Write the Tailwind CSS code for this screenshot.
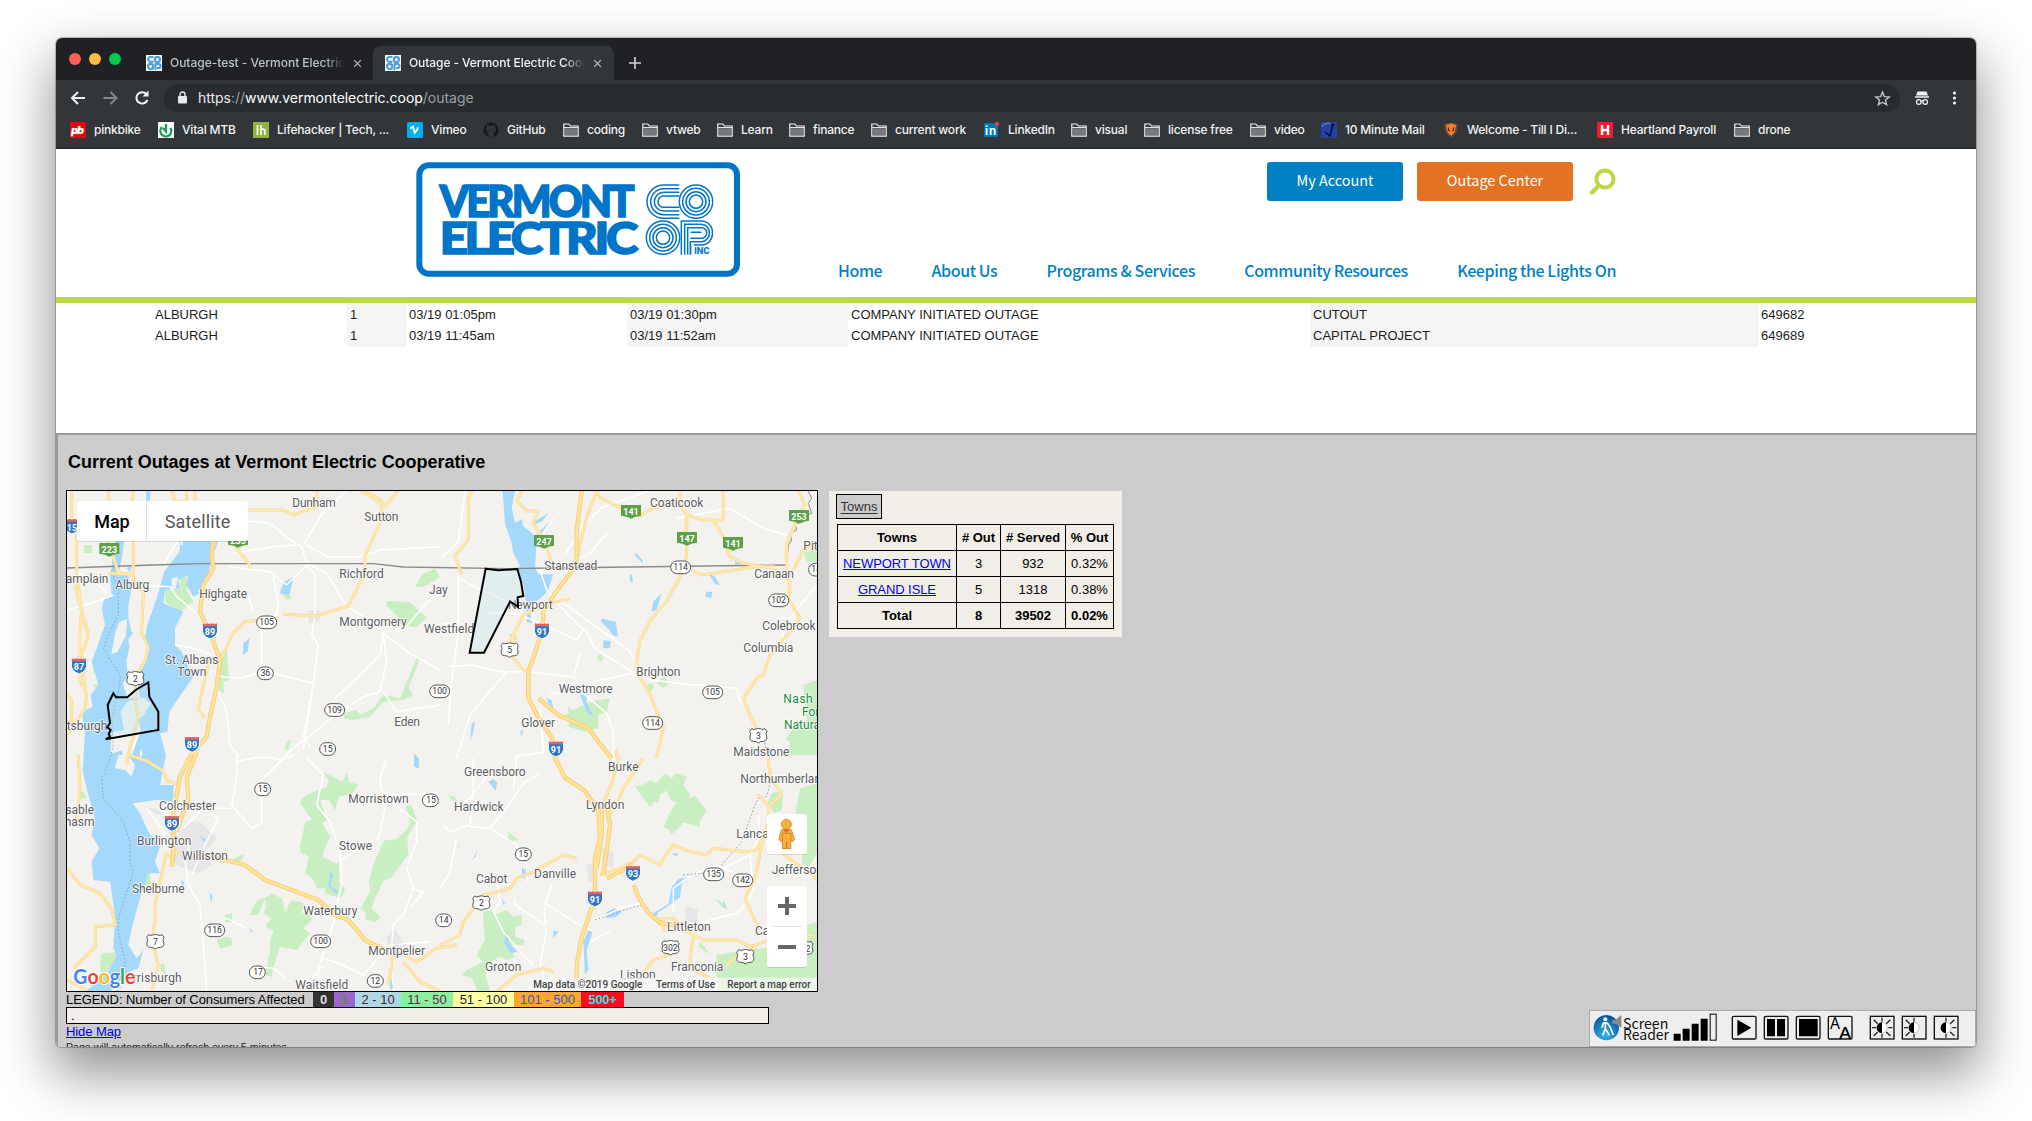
<!DOCTYPE html>
<html lang="en">
<head>
<meta charset="utf-8">
<title>Outage - Vermont Electric Coop</title>
<script src="https://cdn.jsdelivr.net/npm/@tailwindcss/browser@4"></script>
</head>
<body class="bg-white w-[2032px] h-[1121px] overflow-hidden pt-[38px] pl-[56px]">
<svg width="0" height="0" class="absolute">
  <defs>
    <symbol id="folder" viewBox="0 0 16 16"><path d="M.8 14.2V2h5l1.6 2h7.8v10.200z" fill="#35383b" stroke="#f1f3f4" stroke-width="1.2"/><path d="M2 6.500h12v6.500H2z" fill="#76797c"/><path d="M1 5.600h14" stroke="#f1f3f4" stroke-width="1"/></symbol>
    <symbol id="coop" viewBox="0 0 16 16"><rect width="16" height="16" fill="#fff"/><g fill="none" stroke="#4f9ed6" stroke-width="2.200"><path d="M7.500 2H4.500a2.300 2.300 0 0 0 0 4.800h3"/><circle cx="11.400" cy="4.400" r="2.600"/><circle cx="4.600" cy="11.500" r="2.600"/><path d="M9.500 15V9h3a2 2 0 0 1 0 4H11"/></g></symbol>
    <symbol id="close" viewBox="0 0 10 10"><path d="M1.300 1.300l7.400 7.400M8.700 1.300L1.300 8.700" stroke="#bdc1c6" stroke-width="1.300"/></symbol>
    <symbol id="interstate" viewBox="0 0 48 50" overflow="visible"><path d="M3 2q8 3 14 0q7 3 14 0q7 3 14 0l2 14q3 24-23 33Q-2 40 1 16z" fill="#3078c6" stroke="#fff" stroke-width="3"/><path d="M3 2q8 3 14 0q7 3 14 0q7 3 14 0v9H2z" fill="#e0645f"/></symbol>
    <symbol id="usroute" viewBox="0 0 56 48" overflow="visible"><path d="M8 3q7 4 12 1q8-3 16 0q6 3 12-1l6 8q-6 8-1 15q3 14-10 15q-10 0-15 5q-5-5-15-5Q0 40 3 26q5-8-1-15z" fill="#fff" stroke="#555" stroke-width="3"/></symbol>
    <symbol id="quebec" viewBox="0 0 60 44" overflow="visible"><path d="M0 2h60v32q-18 1-30 9Q18 35 0 34z" fill="#5da048"/></symbol>
    <symbol id="r3" viewBox="0 0 62 38" overflow="visible"><rect x="1" y="1" width="60" height="38" rx="19" fill="#fff" stroke="#555" stroke-width="3"/></symbol>
    <symbol id="r2" viewBox="0 0 50 38" overflow="visible"><rect x="1" y="1" width="48" height="38" rx="19" fill="#fff" stroke="#555" stroke-width="3"/></symbol>
  </defs>
</svg>

<div class="w-[1920px] h-[1009px] rounded-t-[6px] rounded-b-[5px] overflow-hidden bg-white flex flex-col shadow-[0_0_1px_1px_rgba(0,0,0,0.25),0_24px_52px_4px_rgba(0,0,0,0.42)]">

  <!-- tab strip -->
  <div class="h-[42px] bg-[#202124] flex items-end shrink-0 font-['Inter',sans-serif] text-[12px] font-medium">
    <div class="flex gap-2 pl-[13px] pb-[15px] w-[90px]">
      <div class="size-3 rounded-full bg-[#ff5f57]"></div><div class="size-3 rounded-full bg-[#febc40]"></div><div class="size-3 rounded-full bg-[#00ca4e]"></div>
    </div>
    <div class="h-[34px] w-[227px] flex items-center text-[#bdc1c6]">
      <svg width="16" height="16" class="shrink-0"><use href="#coop"/></svg>
      <div class="ml-2 w-[174px] overflow-hidden whitespace-nowrap tracking-[-0.03px] [mask-image:linear-gradient(to_right,black_155px,transparent)]">Outage-test - Vermont Electric Coop</div>
      <svg width="9" height="9" class="ml-[9px] shrink-0"><use href="#close"/></svg>
    </div>
    <div class="h-[34px] w-[241px] rounded-t-[8px] bg-[#323639] flex items-center pl-3 text-[#f1f3f4]">
      <svg width="16" height="16" class="shrink-0"><use href="#coop"/></svg>
      <div class="ml-2 w-[176px] overflow-hidden whitespace-nowrap tracking-[-0.08px] [mask-image:linear-gradient(to_right,black_155px,transparent)]">Outage - Vermont Electric Cooperative</div>
      <svg width="9" height="9" class="ml-[8px] shrink-0"><use href="#close"/></svg>
    </div>
    <svg width="12" height="12" viewBox="0 0 12 12" class="ml-[15px] mb-[11px]"><path d="M6 0v12M0 6h12" stroke="#d5d7da" stroke-width="1.600"/></svg>
  </div>

  <!-- address bar -->
  <div class="h-[36px] bg-[#323639] flex items-center shrink-0 font-['Inter',sans-serif] text-[14px]">
    <svg width="108" height="28" viewBox="0 0 108 28" fill="none" stroke-width="2"><path d="M29 14H16.500M22 8l-6 6 6 6" stroke="#f1f3f4"/><path d="M47.500 14H60M54.500 8l6 6-6 6" stroke="#85888b"/><path d="M90.500 10.200A5.700 5.700 0 1 0 91.400 16" stroke="#f1f3f4"/><path d="M92.500 6.500v6h-6z" fill="#f1f3f4"/></svg>
    <div class="h-[28px] w-[1736px] rounded-full bg-[#282c2f] flex items-center pl-[14px] pr-[9px]">
      <svg width="10" height="14" viewBox="0 0 10 14"><rect y="5" width="9" height="7.500" rx="1" fill="#e8eaed"/><path d="M2 6V3.500a2.500 2.500 0 0 1 5 0V6" fill="none" stroke="#e8eaed" stroke-width="1.400"/></svg>
      <div class="ml-[10px] grow text-[#9aa0a6] whitespace-nowrap tracking-[-0.03px] -mt-px"><span class="text-[#e8eaed]">https</span>://<span class="text-white">www.vermontelectric.coop</span>/outage</div>
      <svg width="17" height="17" viewBox="0 0 24 24" fill="none" stroke="#c4c7ca" stroke-width="1.900"><path d="M12 3l2.600 6.300 6.900.5-5.300 4.400 1.700 6.700L12 17.300l-5.900 3.600 1.700-6.700-5.300-4.400 6.900-.5z"/></svg>
    </div>
    <svg width="76" height="28" viewBox="0 0 76 28"><path d="M17.500 7.500h9l1.500 4h-12z" fill="#f1f3f4"/><path d="M15 13h14" stroke="#f1f3f4" stroke-width="1.500"/><g fill="none" stroke="#f1f3f4" stroke-width="1.200"><circle cx="18.800" cy="18" r="2.300"/><circle cx="25.200" cy="18" r="2.300"/><path d="M21 17.500q1-1 2 0"/></g><g fill="#f1f3f4"><circle cx="54.500" cy="9" r="1.600"/><circle cx="54.500" cy="14" r="1.600"/><circle cx="54.500" cy="19" r="1.600"/></g></svg>
  </div>

  <!-- bookmarks -->
  <div class="h-[33px] bg-[#323639] border-b border-[#202124] flex items-start pt-[4px] pl-[14px] shrink-0 font-['Inter',sans-serif] font-medium text-[12px] tracking-[-0.2px] leading-[19px] text-[#f1f3f4] whitespace-nowrap [&_svg]:mt-[2px] [&_svg]:shrink-0">
    <div class="flex gap-2 w-[88px]"><svg width="16" height="16"><rect width="16" height="16" fill="#e30613"/><text x="1" y="12" font-family="Inter" font-weight="900" font-style="italic" font-size="11" fill="#fff" textLength="13">pb</text></svg>pinkbike</div>
    <div class="flex gap-2 w-[95px]"><svg width="16" height="16"><rect width="16" height="16" fill="#fff"/><path d="M4 5a5.500 5.500 0 1 0 8.500 1M8 2v7.500L5 6" fill="none" stroke="#169b52" stroke-width="2.300"/></svg>Vital MTB</div>
    <div class="flex gap-2 w-[154px]"><svg width="16" height="16"><rect width="16" height="16" fill="#8fb33c"/><path d="M4.500 3v10M8 3v10M8 8q3.800-2.200 3.800 1V13" fill="none" stroke="#fff" stroke-width="1.700"/></svg>Lifehacker | Tech, ...</div>
    <div class="flex gap-2 w-[76px]"><svg width="16" height="16"><rect width="16" height="16" rx="1.500" fill="#00adef"/><path d="M3.300 6.500L6 4.700l1.700 6q3.800-3.800 2.800-5.400" fill="none" stroke="#fff" stroke-width="2"/></svg>Vimeo</div>
    <div class="flex gap-2 w-[80px]"><svg width="16" height="16"><path d="M8 .5A7.500 7.500 0 0 0 5.500 15v-2.500q-2 .3-2.700-1.500 2 .9 2.900-.2Q3 10 3 7q0-1.200.9-2.100-.3-1 .1-2 1 0 2.100.8h3.800Q11 3 12 2.900q.4 1 .1 2Q13 5.800 13 7q0 3-2.700 3.800.5.600.5 1.800V15A7.500 7.500 0 0 0 8 .5z" fill="#16181a"/></svg>GitHub</div>
    <div class="flex gap-2 w-[79px]"><svg width="16" height="16"><use href="#folder"/></svg>coding</div>
    <div class="flex gap-2 w-[75px]"><svg width="16" height="16"><use href="#folder"/></svg>vtweb</div>
    <div class="flex gap-2 w-[72px]"><svg width="16" height="16"><use href="#folder"/></svg>Learn</div>
    <div class="flex gap-2 w-[82px]"><svg width="16" height="16"><use href="#folder"/></svg>finance</div>
    <div class="flex gap-2 w-[113px]"><svg width="16" height="16"><use href="#folder"/></svg>current work</div>
    <div class="flex gap-2 w-[87px]"><svg width="16" height="16"><rect y="1" width="14" height="14" fill="#0077b5"/><text x="1" y="12.500" font-family="Inter" font-weight="700" font-size="11.500" fill="#fff" textLength="11">in</text><rect x="11" width="4" height="4" rx="1" fill="#e33e38"/></svg>LinkedIn</div>
    <div class="flex gap-2 w-[73px]"><svg width="16" height="16"><use href="#folder"/></svg>visual</div>
    <div class="flex gap-2 w-[106px]"><svg width="16" height="16"><use href="#folder"/></svg>license free</div>
    <div class="flex gap-2 w-[71px]"><svg width="16" height="16"><use href="#folder"/></svg>video</div>
    <div class="flex gap-2 w-[122px]"><svg width="16" height="16"><rect width="16" height="16" fill="#2442a8"/><path d="M1 4q5-4 9-2" stroke="#8ea3e0" stroke-width="1.500" stroke-dasharray="1 1" fill="none"/><path d="M12 2L9 14 4 10M10 3l2-1 1 2" fill="none" stroke="#0a0d20" stroke-width="1.400"/></svg>10 Minute Mail</div>
    <div class="flex gap-2 w-[154px]"><svg width="16" height="16"><path d="M1 2l7-1.500L15 2l-1 7q-2 4-6 6.500Q4 13 2 9z" fill="#6b4a2f"/><path d="M3 3l5-1.500L13 3l-1 6q-1.500 3-4 4.500Q5.500 12 4 9z" fill="#f47c30"/><path d="M5.500 5.500v2.500l1 1M10.500 5.500v2.500l-1 1" stroke="#3d2516" stroke-width="1.200" fill="none"/></svg>Welcome - Till I Di...</div>
    <div class="flex gap-2 w-[137px]"><svg width="16" height="16"><rect width="16" height="16" fill="#ee1c2e"/><path d="M5 3v10M11 3v10M5 8h6" stroke="#fff" stroke-width="2.400"/></svg>Heartland Payroll</div>
    <div class="flex gap-2"><svg width="16" height="16"><use href="#folder"/></svg>drone</div>
  </div>

  <!-- site header -->
  <header class="h-[154px] bg-white border-b-[6px] border-[#bcd747] shrink-0 flex pl-[360px] font-['Noto_Sans_CJK_SC','Noto_Sans',sans-serif]">
    <svg width="324" height="116" viewBox="49 36 972 348" class="mt-[13px] shrink-0">
      <rect x="59" y="46" width="953" height="325" rx="28" fill="#fff" stroke="#0074c8" stroke-width="18"/>
      <g fill="#0074c8" stroke="#0074c8" stroke-width="5" font-family="Lato" font-weight="900">
        <text y="201" x="120" font-size="133" letter-spacing="-9" textLength="576" lengthAdjust="spacingAndGlyphs">VERMONT</text>
        <text y="312" x="120" font-size="133" letter-spacing="-9" textLength="586" lengthAdjust="spacingAndGlyphs">ELECTRIC</text>
      </g>
      <g fill="none" stroke="#0074c8" stroke-width="4.500">
        <path d="M839 105h-47a50 50 0 0 0 0 100h47M839 116h-47a39 39 0 0 0 0 78h47M839 127h-47a28 28 0 0 0 0 56h47M839 138h-47a17 17 0 0 0 0 34h47"/>
        <circle cx="889" cy="155" r="50" fill="#fff"/><circle cx="889" cy="155" r="40"/><circle cx="889" cy="155" r="30"/><circle cx="889" cy="155" r="20"/>
        <circle cx="790" cy="263" r="50"/><circle cx="790" cy="263" r="40"/><circle cx="790" cy="263" r="30"/><circle cx="790" cy="263" r="20"/>
        <path d="M845 314V213h60a33 33 0 0 1 33 36 33 33 0 0 1-33 36h-23M855 314V223h50a25 25 0 0 1 24 26 25 25 0 0 1-24 26h-33v39M864 314V233h41a15 15 0 0 1 16 16 15 15 0 0 1-16 16h-33M873 247h32M873 285v29"/>
      </g>
      <text x="884" y="312" font-family="Inter" font-weight="800" font-size="26" fill="#0074c8" textLength="46" lengthAdjust="spacingAndGlyphs">INC</text>
    </svg>
    <div class="ml-[98px] w-[778px] flex flex-col">
      <div class="flex justify-end items-start pt-[13px] h-[108px]">
        <div class="w-[136px] h-[39px] rounded-[3px] bg-[#0081c6] text-white text-[14.400px] leading-[36px] text-center">My Account</div>
        <div class="ml-[14px] w-[156px] h-[39px] rounded-[3px] bg-[#e37222] text-white text-[14.400px] leading-[36px] text-center">Outage Center</div>
        <svg width="27" height="27" viewBox="0 0 27 27" class="ml-[16px] mt-[6px]"><circle cx="16" cy="11" r="8.600" fill="none" stroke="#bcd747" stroke-width="4"/><path d="M9.500 18L3 24.500" stroke="#bcd747" stroke-width="4.500" stroke-linecap="round"/></svg>
      </div>
      <nav class="flex justify-between text-[#0081c6] font-medium text-[16px] tracking-[-0.4px] leading-[26px] whitespace-nowrap">
        <a>Home</a><a>About Us</a><a>Programs &amp; Services</a><a>Community Resources</a><a>Keeping the Lights On</a>
      </nav>
    </div>
  </header>

  <!-- outage history -->
  <div class="h-[130px] shrink-0 font-['Liberation_Sans',Arial,sans-serif] text-[13px] text-[#1c1c1c]">
    <div class="grid grid-cols-[195px_59px_221px_221px_462px_448px_1fr] leading-[22px] pl-[96px] [&>div]:pl-[3px] h-[43px]">
      <div><p class="pt-px">ALBURGH</p><p class="-mt-px">ALBURGH</p></div>
      <div class="bg-[#f4f4f4]"><p class="pt-px">1</p><p class="-mt-px">1</p></div>
      <div><p class="pt-px">03/19 01:05pm</p><p class="-mt-px">03/19 11:45am</p></div>
      <div class="bg-[#f4f4f4]"><p class="pt-px">03/19 01:30pm</p><p class="-mt-px">03/19 11:52am</p></div>
      <div><p class="pt-px">COMPANY INITIATED OUTAGE</p><p class="-mt-px">COMPANY INITIATED OUTAGE</p></div>
      <div class="bg-[#f4f4f4]"><p class="pt-px">CUTOUT</p><p class="-mt-px">CAPITAL PROJECT</p></div>
      <div><p class="pt-px">649682</p><p class="-mt-px">649689</p></div>
    </div>
  </div>

  <!-- outage frame -->
  <main class="relative grow min-h-0 bg-[#ccc] border-t-2 border-l-2 border-[#9a9a9a] overflow-hidden font-['Liberation_Sans',Arial,sans-serif] text-[13px] text-black pl-[8px]">
    <h1 class="text-[18px] font-bold leading-[22px] pt-[16px] h-[55px] pl-[2px] tracking-[-0.04px]">Current Outages at Vermont Electric Cooperative</h1>
    <div class="flex items-start gap-[11px]">
      <div class="w-[752px] h-[502px] border border-black shrink-0">
        <svg width="750" height="500" viewBox="21 18 2250 1500">
          <rect x="0" y="0" width="2300" height="1540" fill="#f3f2ef"/>
          <!-- urban areas -->
          <g fill="#e6e6e8"><path d="M740 378l38-2 2 30-32 10zM245 960l50 15 60 80 25-45 40 0 50 50-30 35 15 45-40 25-80-30-10-130z"/><path d="M980 1360l20-30 25 30 30 60-60-5zM1625 1085l38 20-5 45-30-10zM1580 1140l30-10 0 70-25-10zM1875 1265l40 10-5 40-35-10zM1395 320l35-5-5 40-30 5z"/></g>
          <!-- parks -->
          <g fill="#c8eec2">
            <path d="M315 310l60 0 25 40-40 30-45-30zM360 280l20-8 5 40-25-5zM210 450l15-15 15 10-10 40-20-10zM272 390l15-10 0 20-15 3zM72 180h24v24h-24zM95 600l50-10-30 25zM100 550l12 10-14 8zM665 325l20-10 10 25-15 5zM980 347l70 5 50 45-30 30-50-10-5-20-35-35zM1085 270l40-20 15 25-30 20-20 10-25 0zM850 685l40-10 10 15 40-20 30-40 50 10 50-120 10 0-35 90 15 20-30 15-60 5-40 45-50 10-30-5zM475 505l25-10 5 60 5 30-20 5 2 35-15-10zM680 770l15-5-10 30-10 0z"/>
            <path d="M1530 680l60-30 60-10-10 40-25 10 0 40-40 10-50-15 5-25-15-10zM1610 515l12-7 10 12-12 12zM1790 595l20-20 20 18-20 15zM1755 605l20-12 8 12-12 18-15-5zM1345 445l20 5 10 15-20-5zM1525 665l20 20 0 8-22-13z"/>
            <path d="M2230 600l41-15v225h-85l5-40-15-5 30-45 15 15 20-30zM2230 200l41-5v35h-30z"/>
            <path d="M788 860l60 30 12-28 8 28 28 10-20 25-40 10-10 40-20-30-25 0 20 60-15 10 25 40-15 30-10 30 40 20 15-5-5 60 20 25-15 25-45-15 0-15-25 0-10-25-25-20 10-50-25-15 0-20 15-70 20-5-15-20-20-30 5-15 25-15 50-20 5-20z"/>
            <path d="M1035 965l18-8 18 50-30 50 5 50-50 70-25 10-30 60-5 25 25 25-15 15-30-10 0-20-15-10 30-55-5-25 15-55 30-70 40-5 25-25 15-20-5-30zM595 1243l20-3-20 50-25 0 10-25zM615 1240l20-15 30 15 10 40 20-35 35 10-5 30 20-5 10 25-25 25 20 15-40 50-50-10-20 60-5 30-20-5 15-70 0-30 10-35-25-10 20-25-25-15 10-20zM530 1115l25-7-15 22-20-5zM495 1290l20-5 3 25-22 3zM470 1365l25-10 20 5 0 20-33 12zM300 1440l12-5 6 35-15-10zM125 1405l55-5-50 80-10-30zM245 1185l25-30 3 50-20 15zM60 915l12 8 10 15-20 5zM85 820l12 5-2 35-12 0z"/>
            <path d="M1725 905l35-10 10-10 20 10 25-30 20 15 15-15 30 12-10 25 20 25-5 15 20-10 35 45-20 30 0 20-50-15-15 20-20 15-10-15-15-5 20-45 20-30-15-5-15-30-20 10-5 30-10-10-15 20-25-35z" fill-rule="evenodd"/>
            <path d="M1270 1280l25-5 10 15 35-15 20 20 25-5 0 30-20 5 0 30 30 10-5 15-45 0 20 35-20 10-30-10-40 30 5 40 15 50-35 0-15-35-10-20-30-10 15-15 50-25-20-20 25-45-5-60zM1345 1040l30 25-30 5zM1165 930l20 5 10 15-20-5zM1195 1080l8-5-10 15zM1965 1240l25 15 15 20-20-10z"/>
            <path d="M2135 925l35-10-5 60-25 10-8-20-12-5zM2220 910l51-15v210l-25 40-20-10 0-90-20-60zM1970 1410l60-10 110-15 131 20v120h-290l-5-40-10-20zM2240 1320l31-10v110h-31zM1920 1370l30 35-15-5-20-15z"/>
          </g>
          <!-- water -->
          <g fill="#a5d9fc">
            <path d="M165 168H192L186 220 176 258 205 268 213 320 205 360 205 400 215 440 225 450 250 480 262 420 290 340 312 262 358 200 362 168H475L455 220 440 290 412 320 420 325 400 335 380 300 385 270 355 285 360 310 315 315 310 355 370 380 345 430 345 480 365 500 395 570 400 575 355 640 328 680 322 740 300 745 318 810 300 900 342 900 338 950 290 945 218 955 240 985 265 1040 300 1085 285 1130 300 1165 265 1165 240 1240 215 1330 205 1380 230 1420 250 1395 235 1450 200 1465 150 1520H75L140 1470 170 1410 160 1390 165 1290 150 1190 100 1185 95 1130 118 1090 95 1050 105 1000 85 930 68 860 75 740 65 680 98 665 92 630 115 600 95 530 135 420 125 370 135 335 155 330 150 280z"/>
            <path d="M258 18h14l-5 58h-8zM672 290l30-15-15 55-28-5zM550 475l18-15-5 40-15 10zM365 575l30-20-15 30zM200 250l12-8 0 20z"/>
            <path d="M1328 18h37l-10 50 10 45 20-10 5 20 35 30 45-45-40 60-5 80 10 20 0 0 45 0-15 45-10 15 -25 20-30 10 -10-60-20-45 10-10-20-40-5-30-20-55zM1400 355l10 20 5 40-15-5zM1625 400l18 5 25 5 5 45-15-5-10-15-25-25zM1632 465l22 5-5 20-20 0zM1728 205l20 20 0 10-25-25zM1945 265l20 10 15 25-15-2zM1940 320l18 0-5 20-18-5zM1708 268l8 2 3 24-8-4zM1780 350l25-25-15 50-15 5zM2025 220l25 15-25 5zM1560 630l20-5 0 25 20 45-20-15zM1420 110l45-25-20 25-30 10zM1460 640l15 5 5 25-15-15zM1380 740l10-5-5 20zM1235 715l10-5-5 30-10 30z"/>
            <path d="M1285 890l15-8 12 10-5 25zM1385 1150l20 5-10 25-8 0zM1242 1115l10-20-5 20-15 10zM1775 1287l50-30 10-50 20-25 30-5-20 20-5 40-35 25-30 20-10 20zM1640 1280l25-10 20 10-15 15-30 5zM1340 1335l8 40 25 25-20 5-20-30zM1585 1335l15 0-20 60 5 60-10 15-5-100zM1480 1335l15 5-15 20zM1325 1240l10 15-5 5zM1835 1105l20 0-5 10zM1990 1245l10 25-10-5zM808 1160l12 10-10 30 25 20-5 8-25-25 5-30zM448 1220l10 15-5 20zM1062 805l15 15 0 30-15-5zM420 1050l18 15-8 5zM363 1185l10 5-5 20zM988 1480l10 0 0 30-8 5zM570 1325l8 15-5 3z"/>
          </g>
          <!-- islands -->
          <g fill="#f3f2ef"><path d="M178 410l24-8-5 50-25 50-18 5 12-65zM222 440l10-10 18 25 14 35-10 30-25 45 15 20-20 35-30-5-5-20 15-20-5-50 10-40-5-20zM195 600l40 0 5 40-40 0zM182 680l20-30 50-12 20 18-20 35-15 10 5 40-15 35-10 35-30 10 0-25-35 10 0-50 10-15 30-5zM335 280l20-5-8 35-12 5zM225 560l15 5 2 20-20 5zM240 790l8 15-8 20zM175 810l30 0 20 30-10 35-20-20-30-5z"/></g>
          <!-- minor roads -->
          <g fill="none" stroke="#fff" stroke-width="4.500" stroke-linejoin="round">
            <path d="M550 110q80-5 100 20t75 55l15 50 60 30 60 100 100 60 10 30-10 55-60 60 -75 70M520 205l30-5 90-15 70-5M730 180l60-100 70-60M740 180l60 35 100 0 60-20 180-10M740 240l-60 60-50-40-120-15M640 270l15 90-10 40M740 240l25 30 0 120-10 60 20 30-15 120-30 190M560 320l20 60M605 410l0 150-60 20-60-5-30-20M640 565l120 30-30 160 20 30M970 445l80 60 90 50M970 440l60-5 60-70 50-50M970 450l10 80-20 90-50 15-90 60-60 50-80 60M970 620l40 60 130-20M20 265l20-10 70 40 30 30M20 375l60-15 80-30M240 300l90 5 20 30 60 50M475 620l25 60 10 100 30 40M345 480l60 10 50 20M60 460l20 60M370 140l-60 100M1215 18l-20 150-50 50M240 730l-20 60M365 180l20-170"/>
            <path d="M1195 270l0 170-20 150-10 130M1195 280l60 30 110 50M1190 410l-50 10M1160 545l80-5 80 20 80 0 140 15 20-70M1340 560l-110 130-40 130M1280 385l80 0 60 20 130 60 20-30-60-60-50-60-20-60M1490 340l180 130 40 30 30 60 -140 30M1575 430l30 60 110 70 10 15M1740 580l150 20 30 0 110 10 10 40 20-20M1545 575l25 50 70 60 20 60 0 80M1470 625l80 0M1440 670l10 130-80 15-10 100M1765 18l-140 50-60 60-50 80M1850 100l160-30 100 60 70 20M1440 160l40-60M2270 300l-80 100-30 0M2150 400l30 80M1560 220l30-15 50-60M1290 860l-60 80-40 25"/>
            <path d="M530 830q80-20 110-10t60-10M530 810l0 70-15 80 60 70 30-15 0-130 80-80M370 1030l60-60 80 0M395 1060l-20 60 10 80 35 60 10 120 10 140M415 960l60 40-40 80-40 90M740 820l50 50-20 90 40 50 30 90 0 60M980 820l-20 60 15 90-20 90-50 25-60 40 0 70-20 100-30 100-20 50 0 60-40 60-60 20-40-30-60 20-60-30M980 930l150-5M970 920l60 60 40 30 0 60-30 80 20 60-30 80-30 30-10 120 10 60M1050 1210l40 10-40 50M680 1480l-40-30-60-5M790 1420l60 20 60 30 80-90 120-10M560 1330l-60-30-50 20M260 970l60 80M740 1500l50-60"/>
            <path d="M1240 820l0 90-10 110-60 20-20-20M1230 1025l60 5 60-75 40-60 50-30M1290 1030l80 50 30 60 0 50M1190 1060l-20 100-30 50M1475 1200l-20 60 0 60-90-60 0-20M1310 1190l10 60-20 30 30 60 60 70 30 30M1450 1250l90 60 60 30M1460 1330l-20 110 20 60M1600 1310l80-40 80-20M1840 1280l0-70 40-30 80-40 60 20M1890 1325l60-20 80-20 30-30 20-40 -10-100M1990 1150l80-40 30-60-5-60M2230 1340l-60 20-30 30M1590 1370l60-30M1680 1180l-20-20"/>
          </g>
          <!-- borders -->
          <g fill="none" stroke="#8b8b8b" stroke-width="4"><path d="M21 249L280 240 420 236H940L1030 246 1340 251 1480 249 2180 240"/><path d="M2180 240l5-60 10-15-5-20 20-10-5-20 25-5 10-20 15-5-10-30 10-15-10-22" stroke-width="3"/></g>
          <g fill="none" stroke="#8fa6b5" stroke-width="3" stroke-dasharray="5 6"><path d="M160 240v40l15 20 0 90-25 50-20 50 50 80 0 30-25 100 5 80-15 60-20 40 5 60 60 70 20 60 0 60 10 30-45 140 0 40 20 90-10 70-40 60 0 60"/><path d="M1605 1305l30-10 60-20 50-15 20 10M1870 1170l60-5M1985 1140l60-70 40-110 10-20 25-5 15-60-20-100-40-80"/></g>
          <!-- main roads: each route is drawn as casing, then fill -->
          <defs>
            <g id="state">
              <path d="M35 18l0 110 15 20 0 120 15 110-5 60 0 150 20 40-5 40-35 60-20 20-5 60M45 300l20 80 20 70-20 60 10 100M20 625l15 20 0 60-15 5M145 18l5 100-5 50 30 95 45 5 0 20 30 35-5 120 20 45-10 40-30 50 0 60 10 60-25 90-10 50M220 260l0-100-10-50 10-92M145 265l80 5M335 18l10 30 40 5 0 30 70 20 10 80M380 18v30M405 18v60M460 75l210 0 30 15 70-25 0-47M530 100l0 90 40 50 0 10M920 18l45 30 0 55-50 110 0 50-40 80-10 20-95 30-100-5M900 18l30 15 45 30 40-45M655 400l-100 10-40 40 -30 70M450 520l-20 80-15 70 20 30M1235 18l-10 25 0 120-40 50 20 55M1385 18l-15 30 30 30 35 0 0 0-15 35 35 60 20 60M1610 18l10 20 60 30 60 25 40-25 80-10 0-40M1860 18l0 40 20 30 0 120-10 50-50 90-50 60-30 60-10 60 5 40 35 60 40 100-20 90M1875 85l50 20 65 0 0-87M1960 105l30 50 20 60 40 20 90 15 50 40-5 50 35 60-30 40-60 70-20 60-20 10-40 60 20 50 30 60M1895 255l30 15 160-25 60 0M2215 18l20 40-30 60-25 60 0 75M2200 255l30-60 45-15M1610 18l-30 80-20 80-10 50M1365 450l-20 50 50 60M1350 470l40-80 60-30 80-20"/>
              <path d="M55 810l5 100-10 100M21 1150l40 50 60 25 35 50 10 45-60 5 0 60-65 65M21 1485l60 30M200 808l60 20 50 30 10 30 35 10M320 1100l-35 160 0 50-10 60 20 70-20 80M315 1120l40-20M995 1400l0 40-10 60M1030 1410l40 20 60-40 60-10M1030 1430l50 60 60 30M1140 1380l60-30 10-40 60-80 80-20 20-30 50-20 90-50 40 10M1310 1520l60-50 80-20 30 10M1665 795l10 30-20 70-25 60M1750 820l-60 90-20 50-30 40M1620 1170l60-20 40-20 20-20 60 30 10-20 30-40 50 20 50 10 20-20 100 10 30-5 20-40 70-15M2105 1080l20-70 0-50-30-30"/>
              <path d="M2105 1080l-20 100-30 60 40 90M2130 960l35-30-35-60-10-80M2150 1090l50 40 60 40 20 30M1780 1305l60-5 20 20 10 15 60 30 100 0 40 20 60-20 130-15M1810 1300v40M1900 1350l-10 80 20 30 40 20M2000 1440l30-25 60-30M1980 1520l0-40M1730 1490l50-65 60-20"/>
            </g>
            <g id="express"><path d="M1565 18l-15 120 0 100-60 80-40 60 0 50-30 90-15 40 0 80 30 60 40 60 10 30 0 30 30 60 60 40 40 60 5 80-15 60 0 60 0 60-20 60-20 60 -15 80 0 50M1435 640l60 50 90 40 30 40 40 50M1640 1180l60-30 20-15M1722 1200l10 30 30 50 40 35 40 5"/><path d="M470 80l-15 130 5 40-30 50-10 80 40 90 20 55-10 80-20 90-10 60-50 60-30 60-20 110 0 120-5 40M410 800l-30 80 5 60-35 100"/><path d="M420 1110l75 15 60 15 60 45 120 45 40 15 50 45 40 15 50 60 60 30"/><path d="M1625 960l0 90-15 100M1640 960l10 60-20 150"/></g>
          </defs>
          <g fill="none" stroke-linejoin="round">
            <use href="#state" stroke="#f8d590" stroke-width="9"/>
            <use href="#state" stroke="#ffe9a8" stroke-width="6"/>
            <use href="#express" stroke="#f6cd78" stroke-width="13"/>
            <use href="#express" stroke="#ffe293" stroke-width="8"/>
          </g>
          <!-- town labels -->
          <g font-family="Roboto" font-size="36" fill="#5a5c60" stroke="#fff" stroke-width="5" stroke-opacity=".85" class="[paint-order:stroke]" stroke-linejoin="round">
            <text x="697" y="67" textLength="130">Dunham</text><text x="913" y="108" textLength="102">Sutton</text><text x="838" y="280" textLength="133">Richford</text><text x="17" y="294">amplain</text><text x="166" y="313" textLength="102">Alburg</text><text x="418" y="340" textLength="143">Highgate</text><text x="838" y="424" textLength="202">Montgomery</text><text x="1107" y="328">Jay</text><text x="1092" y="444" textLength="151">Westfield</text><text x="315" y="537" textLength="160">St. Albans</text><text x="352" y="574" textLength="87">Town</text><text x="1003" y="724" textLength="77">Eden</text><text x="20" y="735">tsburgh</text>
            <text x="1770" y="66" textLength="160">Coaticook</text><text x="1453" y="256" textLength="159">Stanstead</text><text x="2230" y="195">Pittsburg</text><text x="2083" y="280" textLength="119">Canaan</text><text x="1344" y="373" textLength="134">Newport</text><text x="2107" y="436" textLength="160">Colebrook</text><text x="2050" y="502" textLength="150">Columbia</text><text x="1729" y="574" textLength="132">Brighton</text><text x="1496" y="625" textLength="162">Westmore</text><text x="1384" y="727" textLength="101">Glover</text><text x="2020" y="814" textLength="168">Maidstone</text>
            <text x="16" y="988">sable</text><text x="14" y="1024">hasm</text><text x="297" y="976" textLength="171">Colchester</text><text x="231" y="1081" textLength="163">Burlington</text><text x="366" y="1126" textLength="138">Williston</text><text x="216" y="1225" textLength="158">Shelburne</text><text x="865" y="955" textLength="181">Morristown</text><text x="837" y="1096" textLength="99">Stowe</text><text x="730" y="1291" textLength="162">Waterbury</text><text x="925" y="1411" textLength="170">Montpelier</text><text x="706" y="1513" textLength="159">Waitsfield</text><text x="218" y="1492" textLength="147">rrisburgh</text>
            <text x="1212" y="874" textLength="185">Greensboro</text><text x="1182" y="979" textLength="149">Hardwick</text><text x="1644" y="859" textLength="92">Burke</text><text x="1578" y="973" textLength="115">Lyndon</text><text x="2041" y="895">Northumberland</text><text x="2029" y="1060">Lancaster</text><text x="2135" y="1168">Jefferson</text><text x="1422" y="1178" textLength="126">Danville</text><text x="1248" y="1195" textLength="94">Cabot</text><text x="1821" y="1339" textLength="131">Littleton</text><text x="2085" y="1351">Carroll</text><text x="1275" y="1459" textLength="109">Groton</text><text x="1680" y="1481" textLength="107">Lisbon</text><text x="1833" y="1459" textLength="157">Franconia</text>
            <g fill="#1b8a3c"><text x="2170" y="655" textLength="88">Nash</text><text x="2226" y="694">Forest</text><text x="2172" y="732">Natural</text></g>
          </g>
          <!-- outage areas -->
          <g fill="#bfe3ea" fill-opacity=".32" stroke="#000" stroke-width="6" stroke-linejoin="miter"><path d="M137 763l13-8-4-8 6-12-10-8 8-13-7-54 17-35 8 12h34l25-22 38-23 3 43 27 45v55z"/><path d="M1277 251l38 5 57-4 11 38 7 43-17 4 1 29-10-8-14-8-78 153h-43z"/></g>
          <!-- route shields -->
          <g font-family="Roboto" font-size="26" text-anchor="middle" fill="#333">
            <use href="#r3" x="589" y="392" width="62" height="38"/><text x="620" y="420">105</text><use href="#r2" x="591" y="545" width="50" height="38"/><text x="616" y="573">36</text><use href="#r3" x="793" y="655" width="62" height="38"/><text x="824" y="683">109</text><use href="#r3" x="1108" y="599" width="62" height="38"/><text x="1139" y="627">100</text><use href="#r2" x="778" y="772" width="50" height="38"/><text x="803" y="800">15</text>
            <use href="#r3" x="1831" y="227" width="62" height="38"/><text x="1862" y="255">114</text><use href="#r3" x="2125" y="326" width="62" height="38"/><text x="2156" y="354">102</text><use href="#r3" x="2245" y="234" width="62" height="38"/><text x="2276" y="262">145</text><use href="#r3" x="1927" y="602" width="62" height="38"/><text x="1958" y="630">105</text><use href="#r3" x="1747" y="694" width="62" height="38"/><text x="1778" y="722">114</text>
            <use href="#r2" x="583" y="893" width="50" height="38"/><text x="608" y="921">15</text><use href="#r2" x="1086" y="926" width="50" height="38"/><text x="1113" y="954">15</text><use href="#r3" x="433" y="1316" width="62" height="38"/><text x="464" y="1344">116</text><use href="#r3" x="751" y="1349" width="62" height="38"/><text x="782" y="1377">100</text><use href="#r2" x="567" y="1442" width="50" height="38"/><text x="594" y="1470">17</text><use href="#r2" x="921" y="1468" width="50" height="38"/><text x="946" y="1496">12</text><use href="#r2" x="1126" y="1286" width="50" height="38"/><text x="1151" y="1314">14</text><use href="#r2" x="1365" y="1088" width="50" height="38"/><text x="1390" y="1116">15</text><use href="#r3" x="1930" y="1148" width="62" height="38"/><text x="1961" y="1176">135</text><use href="#r3" x="2017" y="1166" width="62" height="38"/><text x="2048" y="1194">142</text>
            <use href="#usroute" x="198" y="557" width="56" height="48"/><text x="226" y="591">2</text><use href="#usroute" x="1321" y="471" width="56" height="48"/><text x="1349" y="505">5</text><use href="#usroute" x="2067" y="728" width="56" height="48"/><text x="2095" y="762">3</text><use href="#usroute" x="258" y="1346" width="56" height="48"/><text x="286" y="1380">7</text><use href="#usroute" x="1236" y="1230" width="56" height="48"/><text x="1264" y="1264">2</text><use href="#usroute" x="1801" y="1364" width="61" height="48"/><text x="1831" y="1398">302</text><use href="#usroute" x="2028" y="1391" width="56" height="48"/><text x="2056" y="1425">3</text><use href="#usroute" x="2205" y="1366" width="56" height="48"/><text x="2244" y="1400">2</text>
            <g fill="#fff" font-weight="700" font-size="27">
              <use href="#interstate" x="426" y="413" width="48" height="50"/><text x="450" y="450">89</text><use href="#interstate" x="33" y="518" width="48" height="50"/><text x="57" y="554">87</text><use href="#interstate" x="372" y="753" width="48" height="50"/><text x="396" y="790">89</text><use href="#interstate" x="12" y="100" width="48" height="48"/><text x="36" y="137">15</text><use href="#interstate" x="1422" y="413" width="48" height="50"/><text x="1446" y="450">91</text><use href="#interstate" x="1464" y="767" width="48" height="50"/><text x="1488" y="804">91</text><use href="#interstate" x="312" y="990" width="48" height="50"/><text x="336" y="1027">89</text><use href="#interstate" x="1695" y="1140" width="48" height="50"/><text x="1719" y="1177">93</text><use href="#interstate" x="1581" y="1217" width="48" height="50"/><text x="1605" y="1255">91</text>
              <use href="#quebec" x="118" y="172" width="60" height="44"/><text x="148" y="204">223</text><use href="#quebec" x="504" y="145" width="60" height="44"/><text x="534" y="177">235</text><use href="#quebec" x="1422" y="148" width="60" height="44"/><text x="1452" y="180">247</text><use href="#quebec" x="1683" y="58" width="60" height="44"/><text x="1713" y="90">141</text><use href="#quebec" x="1851" y="139" width="60" height="44"/><text x="1881" y="171">147</text><use href="#quebec" x="1989" y="154" width="60" height="44"/><text x="2019" y="186">141</text><use href="#quebec" x="2187" y="73" width="60" height="44"/><text x="2217" y="105">253</text>
            </g>
          </g>
          <!-- credits -->
          <rect x="1405" y="1478" width="866" height="40" fill="#f5f5f5" fill-opacity=".75"/>
          <g font-family="Roboto" font-weight="500" font-size="30" fill="#444"><text x="1420" y="1509" textLength="327" lengthAdjust="spacingAndGlyphs">Map data ©2019 Google</text><text x="1788" y="1509" textLength="177" lengthAdjust="spacingAndGlyphs">Terms of Use</text><text x="2002" y="1509" textLength="250" lengthAdjust="spacingAndGlyphs">Report a map error</text></g>
          <text x="40" y="1496" font-family="Lato" font-weight="700" font-size="64" stroke="#fff" stroke-width="5" class="[paint-order:stroke]" textLength="186" lengthAdjust="spacingAndGlyphs"><tspan fill="#4285f4">G</tspan><tspan fill="#ea4335">o</tspan><tspan fill="#fbbc05">o</tspan><tspan fill="#4285f4">g</tspan><tspan fill="#34a853">l</tspan><tspan fill="#ea4335">e</tspan></text>
          <!-- controls -->
          <g class="drop-shadow-[0_1px_2px_rgba(0,0,0,0.3)]">
            <rect x="51" y="48" width="513" height="120" rx="5" fill="#fff"/>
            <rect x="2121" y="987" width="120" height="120" rx="5" fill="#fff"/><rect x="2121" y="1203" width="120" height="243" rx="5" fill="#fff"/>
          </g>
          <path d="M259.500 48v120" stroke="#e3e3e3" stroke-width="3"/>
          <text x="103" y="128" font-family="Roboto" font-weight="500" font-size="54" fill="#000" textLength="106">Map</text><text x="314" y="128" font-family="Roboto" font-size="54" fill="#565656" textLength="197">Satellite</text>
          <path d="M2136 1324h90" stroke="#e0e0e0" stroke-width="3"/><path d="M2154 1263h54M2181 1236v54M2154 1386h54" stroke="#666" stroke-width="12"/>
          <g fill="#fbb03b" stroke="#b87823" stroke-width="2"><path d="M2164 1034q15-5 30 0l10 30-8 6-6-10 2 30h-24l2-30-6 10-8-6z"/><path d="M2167 1045h26l-1 46h-10l-2-22-2 22h-10z"/><circle cx="2179" cy="1018" r="15"/></g><path d="M2168 1032h22l-11 14z" fill="#e0742a"/>
        </svg>
      </div>
      <div class="w-[293px] h-[146px] bg-[#f1eee8] mt-px pt-[3px] pl-[7px]">
        <div class="w-[46px] h-[25px] border border-black bg-[#ccc] text-[#333] underline leading-[23px] text-center text-[13px] underline-offset-2">Towns</div>
        <table class="mt-[5px] ml-px w-[277px] table-fixed text-center [&_td]:border [&_td]:border-black [&_td]:p-0 [&_td]:h-[26px] whitespace-nowrap text-[13px] [&_a]:text-[#0000ee] [&_a]:underline [&_a]:tracking-[-0.08px]">
          <colgroup><col class="w-[119px]"><col class="w-[44px]"><col class="w-[65px]"><col class="w-[48px]"></colgroup>
          <tr class="font-bold"><td>Towns</td><td># Out</td><td># Served</td><td>% Out</td></tr>
          <tr><td><a>NEWPORT TOWN</a></td><td>3</td><td>932</td><td>0.32%</td></tr>
          <tr><td><a>GRAND ISLE</a></td><td>5</td><td>1318</td><td>0.38%</td></tr>
          <tr class="font-bold"><td>Total</td><td>8</td><td>39502</td><td>0.02%</td></tr>
        </table>
      </div>
    </div>
    <div class="flex h-[15px] leading-[15px] text-center whitespace-nowrap">
      <div class="w-[247px] text-left tracking-[-0.09px]">LEGEND: Number of Consumers Affected</div>
      <div class="w-[21px] bg-[#333] text-[#ddd] font-bold">0</div><div class="w-[21px] bg-[#9966cc] text-[#5a8f3c] font-bold">1</div><div class="w-[46px] bg-[#add8e6] text-[#52271a]">2 - 10</div><div class="w-[52px] bg-[#8af09a] text-[#701a65]">11 - 50</div><div class="w-[61px] bg-[#ffffa0] text-[#1a1a50]">51 - 100</div><div class="w-[67px] bg-[#ffa530] text-[#2a5bd0]">101 - 500</div><div class="w-[43px] bg-[#ff0a1e] text-[#1fe6e8] font-bold tracking-[-0.3px]">500+</div>
    </div>
    <div class="w-[703px] h-[17px] border border-black bg-[#f1eee8] pl-1 leading-[15px]">.</div>
    <div class="leading-[15px] text-[#0000ee] underline tracking-[-0.08px]">Hide Map</div>
    <div class="leading-[14px] pt-px text-[10.600px] text-[#222] whitespace-nowrap">Page will automatically refresh every 5 minutes.</div>

    <!-- screen reader toolbar overlay -->
    <div class="absolute right-0 bottom-0 w-[387px] h-[37px] bg-[#eee] border border-[#aaa]">
      <svg width="385" height="35" viewBox="61 64 1155 105">
        <defs><radialGradient id="globe" cx=".45" cy=".8" r=".8"><stop offset="0" stop-color="#35b4ec"/><stop offset="1" stop-color="#064f98"/></radialGradient></defs>
        <circle cx="110" cy="114" r="38" fill="url(#globe)"/><path d="M128 90l10 0 17-14v38l-17-12h-10z" fill="#888"/>
        <circle cx="107" cy="89" r="6" fill="#fff"/><path d="M107 97v20l-8 20M107 117l12 20M97 114l4-14 12 0 8 12 10 24" fill="none" stroke="#fff" stroke-width="5"/>
        <g font-family="Noto Sans CJK SC" font-size="43" fill="#111"><text x="160" y="117" textLength="136" lengthAdjust="spacingAndGlyphs">Screen</text><text x="160" y="152" textLength="138" lengthAdjust="spacingAndGlyphs">Reader</text></g>
        <path d="M312 132h21v21h-21zM339 117h21v36h-21zM366 102h21v51h-21zM393 87h21v66h-21z" fill="#000"/><rect x="421.500" y="73.500" width="18" height="78" fill="#eee" stroke="#000" stroke-width="3"/>
        <g fill="#eee" stroke="#111" stroke-width="4"><rect x="488" y="80" width="71" height="68" rx="4"/><rect x="584" y="80" width="71" height="68" rx="4"/><rect x="680" y="80" width="71" height="68" rx="4"/><rect x="776" y="80" width="71" height="68" rx="4"/><rect x="902" y="80" width="71" height="68"/><rect x="998" y="80" width="71" height="68"/><rect x="1094" y="80" width="71" height="68"/></g>
        <path d="M503 90l42 24-42 25zM592 88h24v52h-24zM622 88h24v52h-24zM688 88h56v52h-56z"/>
        <g font-family="Noto Sans"><text x="781" y="119" font-size="48" textLength="30" lengthAdjust="spacingAndGlyphs">A</text><text x="808" y="147" font-size="50" font-weight="500" textLength="37" lengthAdjust="spacingAndGlyphs">A</text></g>
        <g stroke="#222" stroke-width="4" fill="none">
          <path d="M937 84v12M937 132v12M907 114h12M956 114h12M912 90l12 12M962 90l-12 12M912 139l12-12M962 139l-12-12"/>
          <path d="M1033 84v12M1033 132v12M1003 114h12M1008 90l12 12M1008 139l12-12"/>
          <path d="M1129 84v12M1129 132v12M1148 114h12M1154 90l-12 12M1154 139l-12-12"/>
        </g>
        <g fill="#fff" stroke="#aaa" stroke-width="2"><circle cx="937" cy="114" r="16"/><circle cx="1033" cy="114" r="16"/><circle cx="1129" cy="114" r="16"/></g>
        <path d="M937 98a16 16 0 0 0 0 32zM1033 98a16 16 0 0 0 0 32zM1129 98a16 16 0 0 0 0 32z"/>
      </svg>
    </div>
  </main>
</div>
</body>
</html>
